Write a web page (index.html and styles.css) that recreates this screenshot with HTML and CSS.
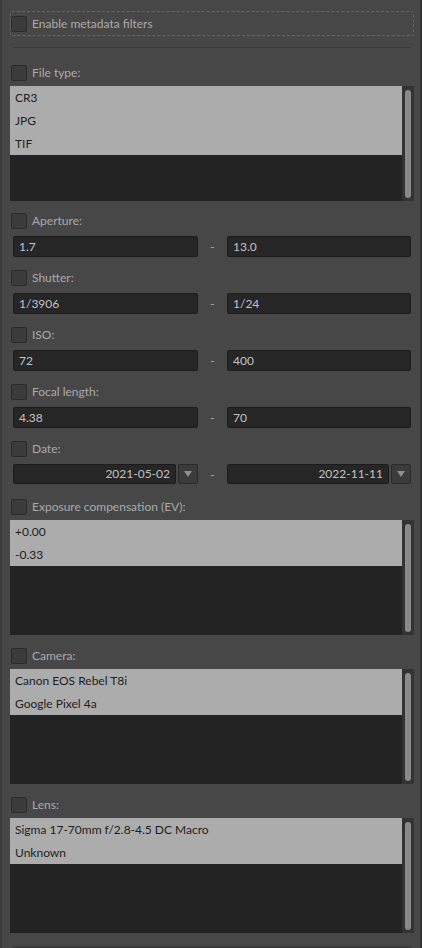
FILE: index.html
```
<!DOCTYPE html>
<html>
<head>
<meta charset="utf-8">
<link rel="stylesheet" href="styles.css">
</head>
<body>
<div class="panel">
  <div class="enable"><span class="cb"></span><span class="lbl">Enable metadata filters</span></div>
  <div class="sep"></div>

  <div class="section first">
    <div class="hdr"><span class="cb"></span><span>File type:</span></div>
    <div class="list">
      <div class="items">
        <div class="item">CR3</div>
        <div class="item">JPG</div>
        <div class="item">TIF</div>
      </div>
      <div class="scroll"><div class="thumb"></div></div>
    </div>
  </div>

  <div class="section after-list">
    <div class="hdr"><span class="cb"></span><span>Aperture:</span></div>
    <div class="range">
      <div class="input">1.7</div><div class="dash">-</div><div class="input">13.0</div>
    </div>
  </div>

  <div class="section">
    <div class="hdr"><span class="cb"></span><span>Shutter:</span></div>
    <div class="range">
      <div class="input">1/3906</div><div class="dash">-</div><div class="input">1/24</div>
    </div>
  </div>

  <div class="section">
    <div class="hdr"><span class="cb"></span><span>ISO:</span></div>
    <div class="range">
      <div class="input">72</div><div class="dash">-</div><div class="input">400</div>
    </div>
  </div>

  <div class="section">
    <div class="hdr"><span class="cb"></span><span>Focal length:</span></div>
    <div class="range">
      <div class="input">4.38</div><div class="dash">-</div><div class="input">70</div>
    </div>
  </div>

  <div class="section date-section">
    <div class="hdr"><span class="cb"></span><span>Date:</span></div>
    <div class="range">
      <div class="date"><div class="input right">2021-05-02</div><div class="drop"><span class="tri"></span></div></div>
      <div class="dash">-</div>
      <div class="date"><div class="input right">2022-11-11</div><div class="drop"><span class="tri"></span></div></div>
    </div>
  </div>

  <div class="section after-date">
    <div class="hdr"><span class="cb"></span><span>Exposure compensation (EV):</span></div>
    <div class="list">
      <div class="items">
        <div class="item">+0.00</div>
        <div class="item">-0.33</div>
      </div>
      <div class="scroll"><div class="thumb"></div></div>
    </div>
  </div>

  <div class="section">
    <div class="hdr"><span class="cb"></span><span>Camera:</span></div>
    <div class="list">
      <div class="items">
        <div class="item">Canon EOS Rebel T8i</div>
        <div class="item">Google Pixel 4a</div>
      </div>
      <div class="scroll"><div class="thumb"></div></div>
    </div>
  </div>

  <div class="section">
    <div class="hdr"><span class="cb"></span><span>Lens:</span></div>
    <div class="list">
      <div class="items">
        <div class="item">Sigma 17-70mm f/2.8-4.5 DC Macro</div>
        <div class="item">Unknown</div>
      </div>
      <div class="scroll"><div class="thumb"></div></div>
    </div>
  </div>

  <div class="tail"></div>
</div>
</body>
</html>
```
FILE: styles.css
```
html, body {
  margin: 0;
  padding: 0;
  background: #474747;
}

.panel {
  box-sizing: border-box;
  width: 422px;
  height: 948px;
  overflow: hidden;
  background: #474747;
  border-left: 2px solid #3a3a3a;
  border-right: 2px solid #333333;
  padding: 11px 6px 0 8px;
  font-family: Lato, "Noto Sans", sans-serif;
  font-size: 12px;
  color: #aaaaaa;
}

.enable {
  box-sizing: border-box;
  height: 25px;
  border: 1px dashed #666666;
  border-radius: 2px;
  display: flex;
  align-items: center;
  gap: 5px;
}

.cb {
  display: block;
  flex: none;
  box-sizing: border-box;
  width: 16px;
  height: 16px;
  background: #3b3b3b;
  border: 1px solid #2b2b2b;
  border-radius: 2px;
}

.sep {
  height: 1px;
  background: #3a3a3a;
  margin: 11px 3px 17px;
}

.section {
  margin-top: 13px;
}
.section.first {
  margin-top: 0;
}
.section.after-list {
  margin-top: 12px;
}
.section.after-date {
  margin-top: 15px;
}

.hdr {
  display: flex;
  align-items: center;
  gap: 5px;
  height: 16px;
  padding-left: 1px;
  line-height: 16px;
  white-space: nowrap;
}

.list {
  margin-top: 5px;
  height: 115px;
  display: flex;
  background: #232323;
}
.items {
  flex: 1;
}
.item {
  height: 23px;
  line-height: 23px;
  padding-left: 5px;
  background: #acacac;
  color: #1e1e1e;
  white-space: nowrap;
}
.scroll {
  box-sizing: border-box;
  width: 12px;
  padding: 4px 3px 3px;
  background: #333333;
}
.thumb {
  height: 100%;
  background: #8a8a8a;
  border-radius: 3px;
}

.range {
  margin: 7px 3px 0;
  display: grid;
  grid-template-columns: 185px 1fr 184px;
  height: 21px;
}
.input {
  box-sizing: border-box;
  height: 21px;
  background: #262626;
  border: 1px solid #1c1c1c;
  border-radius: 2px;
  color: #c2c2c2;
  padding: 0 5px;
  line-height: 19px;
  white-space: nowrap;
}
.input.right {
  flex: 1;
  text-align: right;
}
.dash {
  text-align: center;
  line-height: 21px;
  color: #a8a8a8;
}

.date-section .range {
  height: 20px;
}
.date-section .input {
  height: 20px;
  line-height: 18px;
}
.date {
  display: flex;
  gap: 2px;
}
.drop {
  box-sizing: border-box;
  width: 20px;
  height: 20px;
  flex: none;
  background: #3b3b3b;
  border: 1px solid #2a2a2a;
  border-radius: 2px;
  display: flex;
  align-items: center;
  justify-content: center;
}
.tri {
  width: 0;
  height: 0;
  border-left: 4px solid transparent;
  border-right: 4px solid transparent;
  border-top: 6px solid #8e8e8e;
}

.tail {
  margin: 13px 3px 0;
  height: 3px;
  background: #3a3a3a;
}
```
